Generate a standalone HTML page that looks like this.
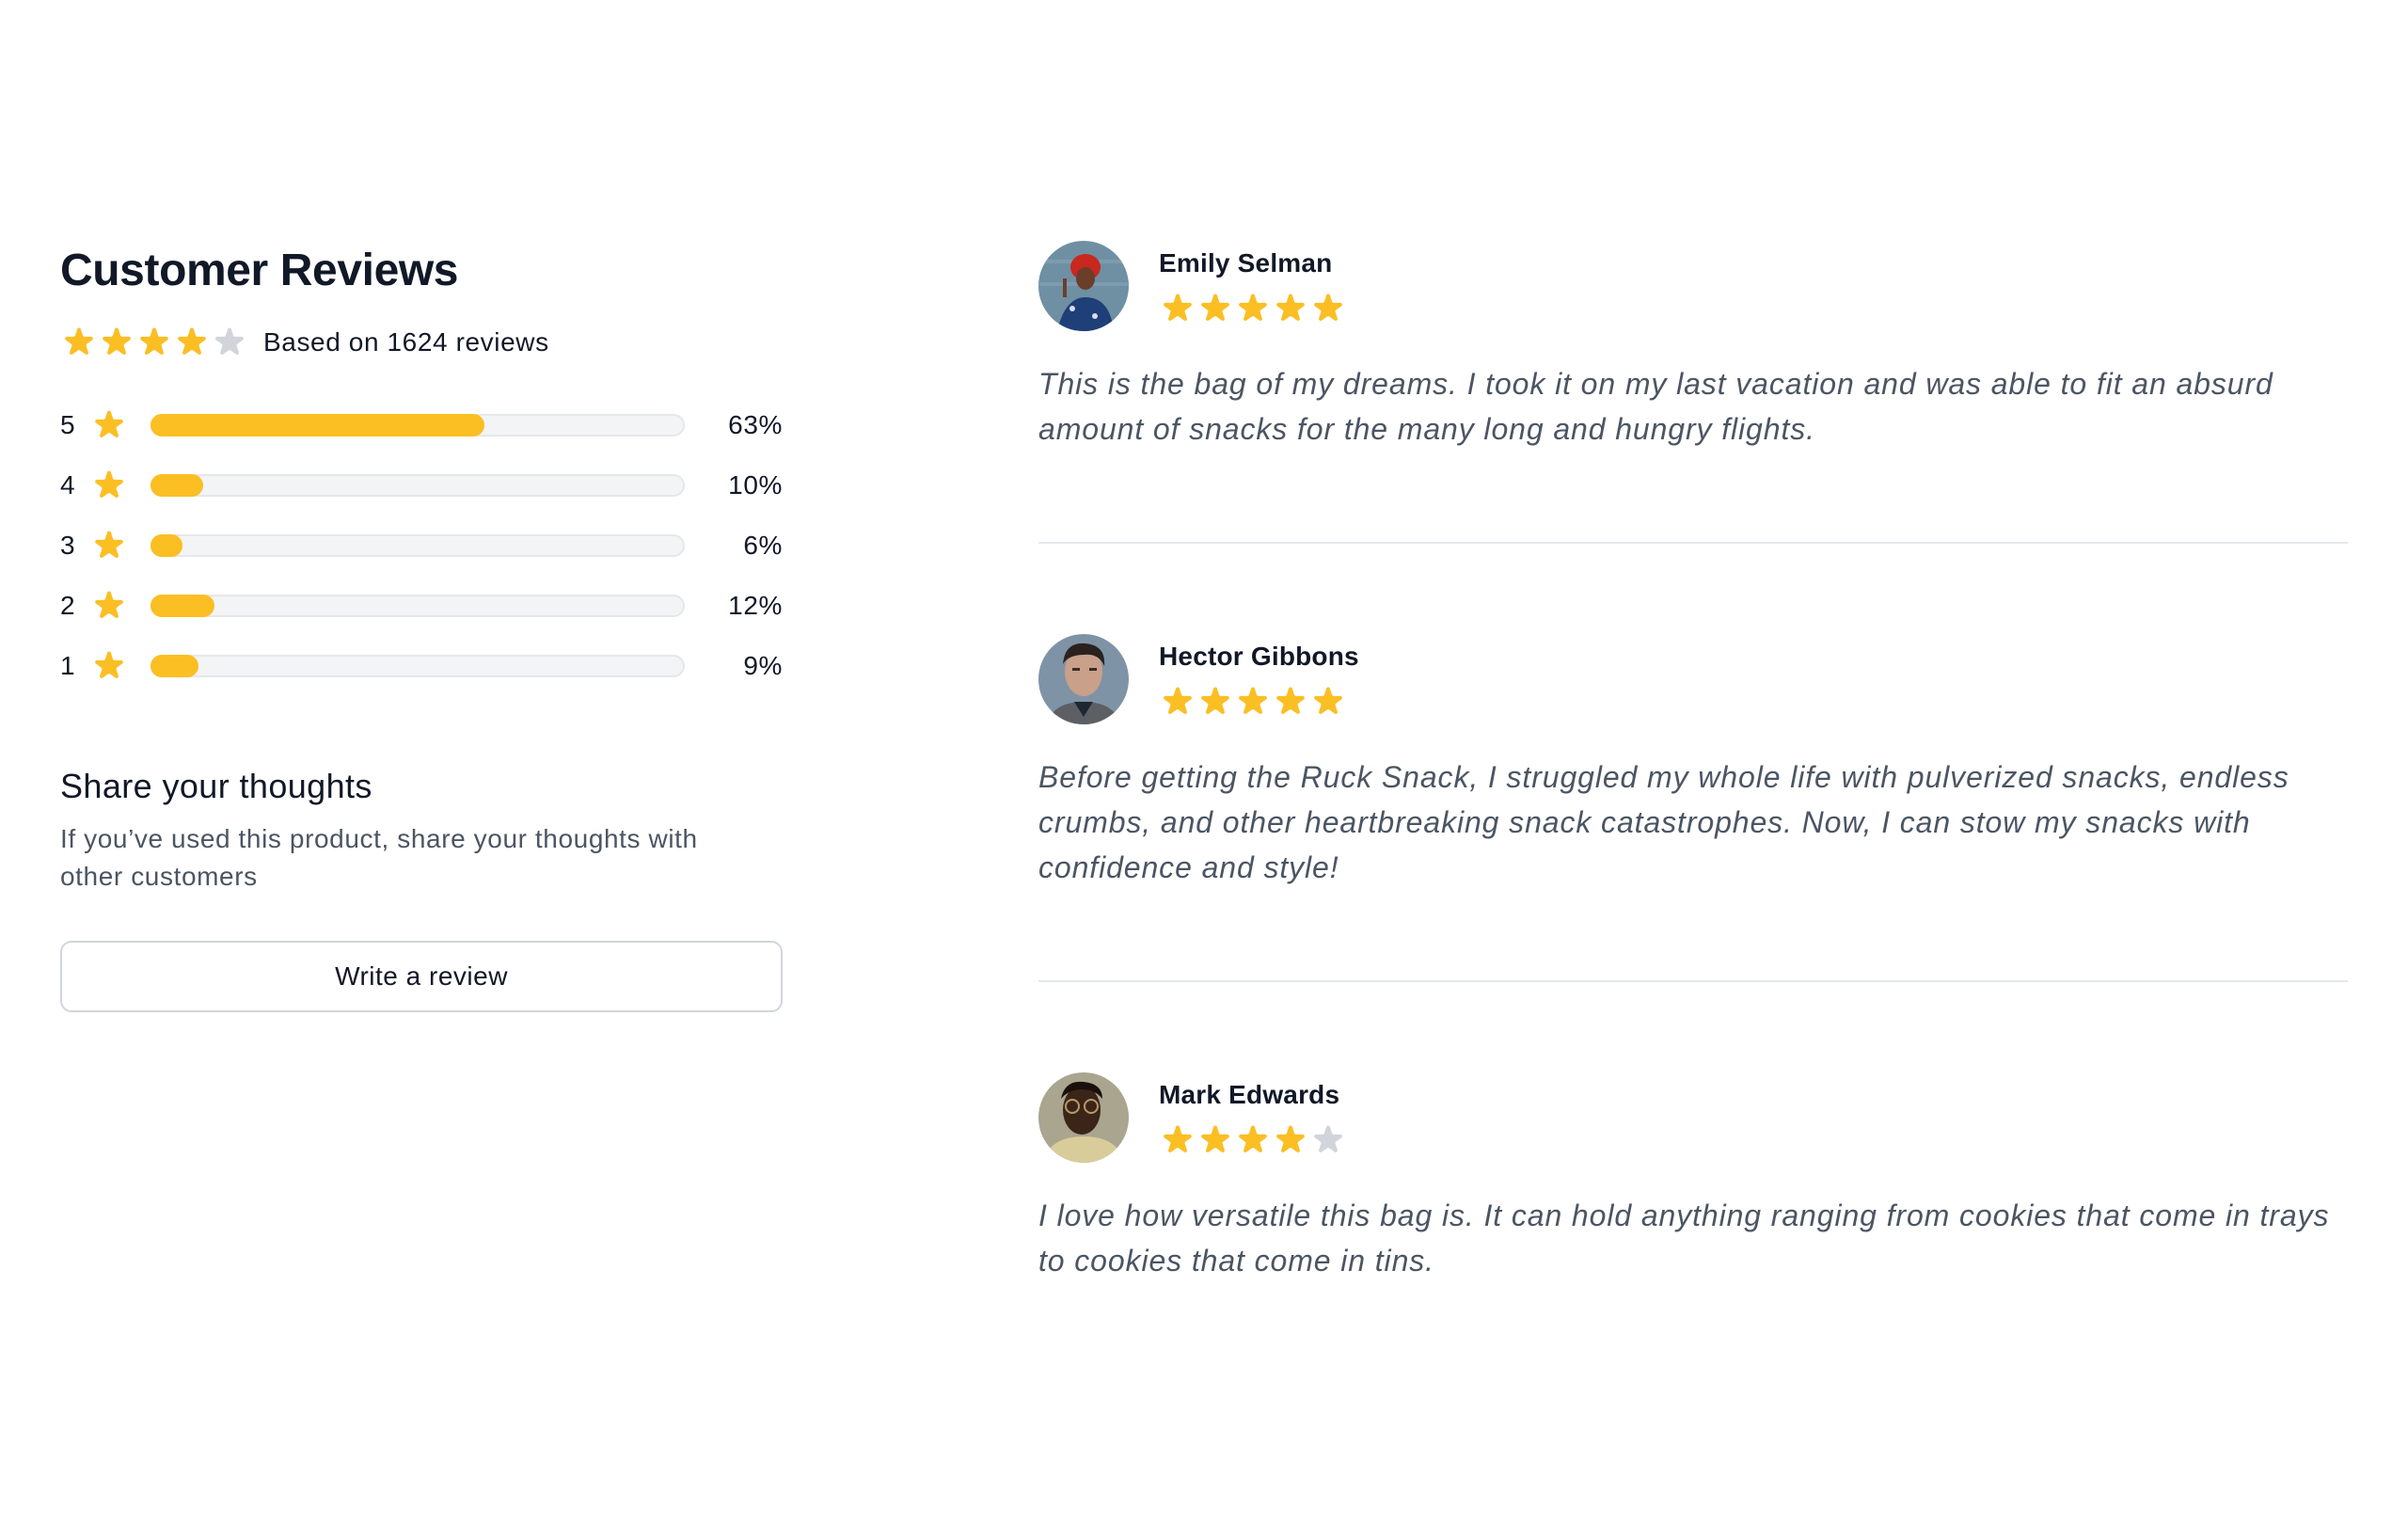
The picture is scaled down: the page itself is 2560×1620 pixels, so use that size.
<!DOCTYPE html>
<html><head><meta charset="utf-8"><style>
html{zoom:2}
*{box-sizing:border-box;margin:0;padding:0}
body{width:1280px;height:810px;background:#fff;font-family:"Liberation Sans",Arial,sans-serif;color:#111827;overflow:hidden}
.left{position:absolute;left:32px;top:128px;width:384px}
h2{font-size:24px;line-height:32px;font-weight:700;letter-spacing:-0.2px;color:#111827}
.row{display:flex;align-items:center}
svg.s{width:20px;height:20px;flex:none}
.y{fill:#fbbf24}.g{fill:#d1d5db}
.based{margin-left:8px;font-size:14px;letter-spacing:.3px;color:#111827}
dl{margin-top:24px}
.bar{display:flex;align-items:center;font-size:14px;height:20px;margin-bottom:12px;letter-spacing:.3px}
.bar .n{width:12px}
.bar .t{margin-left:12px;flex:1;height:12px;border:1px solid #e5e7eb;background:#f3f4f6;border-radius:9999px;position:relative}
.bar .f{position:absolute;left:-1px;top:-1px;bottom:-1px;background:#fbbf24;border-radius:9999px;border:1px solid #fbbf24}
.bar .p{margin-left:12px;width:40px;text-align:right}
h3{margin-top:40px;font-size:18px;font-weight:500;line-height:28px;letter-spacing:.2px}
.sub{margin-top:4px;font-size:14px;line-height:20px;color:#4b5563;letter-spacing:.3px}
.btn{margin-top:24px;display:flex;justify-content:center;border:1px solid #d1d5db;border-radius:6px;padding:8px 32px;font-size:14px;line-height:20px;font-weight:500;color:#111827;letter-spacing:.25px}
.right{position:absolute;left:552px;top:128px;width:696px}
.rev{padding:0 0 48px;border-bottom:1px solid #e5e7eb}
.rev+.rev{padding-top:48px}
.rev:last-child{border-bottom:none}
.hd{display:flex;align-items:center}
.av{width:48px;height:48px;border-radius:50%;overflow:hidden;flex:none}
.nm{margin-left:16px}
.nm h4{font-size:14px;font-weight:700;line-height:20px;letter-spacing:.1px}
.st{margin-top:4px;display:flex}
.txt{margin-top:16px;font-size:16px;line-height:24px;font-style:italic;color:#4b5563;white-space:nowrap;letter-spacing:.45px}
</style></head><body>
<svg width="0" height="0" style="position:absolute"><defs><path id="star" d="M9.049 2.927c.3-.921 1.603-.921 1.902 0l1.07 3.292a1 1 0 00.95.69h3.462c.969 0 1.371 1.24.588 1.81l-2.8 2.034a1 1 0 00-.364 1.118l1.070 3.292c.3.921-.755 1.688-1.54 1.118l-2.8-2.034a1 1 0 00-1.175 0l-2.8 2.034c-.784.57-1.838-.197-1.539-1.118l1.07-3.292a1 1 0 00-.363-1.118l-2.8-2.034c-.783-.57-.38-1.81.588-1.81h3.461a1 1 0 00.951-.69l1.07-3.292z"/></defs></svg>
<div class="left">
<h2>Customer Reviews</h2>
<div class="row" style="margin-top:12px">
<svg class="s y" viewBox="0 0 20 20"><use href="#star"/></svg><svg class="s y" viewBox="0 0 20 20"><use href="#star"/></svg><svg class="s y" viewBox="0 0 20 20"><use href="#star"/></svg><svg class="s y" viewBox="0 0 20 20"><use href="#star"/></svg><svg class="s g" viewBox="0 0 20 20"><use href="#star"/></svg>
<span class="based">Based on 1624 reviews</span></div>
<dl>
<div class="bar"><span class="n">5</span><svg class="s y" style="margin-left:4px" viewBox="0 0 20 20"><use href="#star"/></svg><div class="t"><div class="f" style="width:63%"></div></div><span class="p">63%</span></div>
<div class="bar"><span class="n">4</span><svg class="s y" style="margin-left:4px" viewBox="0 0 20 20"><use href="#star"/></svg><div class="t"><div class="f" style="width:10%"></div></div><span class="p">10%</span></div>
<div class="bar"><span class="n">3</span><svg class="s y" style="margin-left:4px" viewBox="0 0 20 20"><use href="#star"/></svg><div class="t"><div class="f" style="width:6%"></div></div><span class="p">6%</span></div>
<div class="bar"><span class="n">2</span><svg class="s y" style="margin-left:4px" viewBox="0 0 20 20"><use href="#star"/></svg><div class="t"><div class="f" style="width:12%"></div></div><span class="p">12%</span></div>
<div class="bar"><span class="n">1</span><svg class="s y" style="margin-left:4px" viewBox="0 0 20 20"><use href="#star"/></svg><div class="t"><div class="f" style="width:9%"></div></div><span class="p">9%</span></div>
</dl>
<h3>Share your thoughts</h3>
<p class="sub">If you’ve used this product, share your thoughts with<br>other customers</p>
<div class="btn">Write a review</div>
</div>
<div class="right">
<div class="rev">
<div class="hd"><div class="av"><svg width="48" height="48" viewBox="0 0 48 48"><rect width="48" height="48" fill="#6f8fa3"/><rect y="10" width="48" height="2" fill="#7d9cb0"/><rect y="22" width="48" height="2" fill="#7d9cb0"/><ellipse cx="25" cy="14" rx="8" ry="7" fill="#c8281f"/><ellipse cx="25" cy="20" rx="5" ry="6" fill="#6b3e2a"/><path d="M10 48 Q14 30 25 30 Q38 30 40 48Z" fill="#1f3f78"/><circle cx="18" cy="36" r="1.5" fill="#dde"/><circle cx="30" cy="40" r="1.5" fill="#dde"/><rect x="13" y="20" width="2" height="10" fill="#6b3e2a"/></svg></div>
<div class="nm"><h4>Emily Selman</h4><div class="st"><svg class="s y" viewBox="0 0 20 20"><use href="#star"/></svg><svg class="s y" viewBox="0 0 20 20"><use href="#star"/></svg><svg class="s y" viewBox="0 0 20 20"><use href="#star"/></svg><svg class="s y" viewBox="0 0 20 20"><use href="#star"/></svg><svg class="s y" viewBox="0 0 20 20"><use href="#star"/></svg></div></div></div>
<p class="txt">This is the bag of my dreams. I took it on my last vacation and was able to fit an absurd<br>amount of snacks for the many long and hungry flights.</p>
</div>
<div class="rev">
<div class="hd"><div class="av"><svg width="48" height="48" viewBox="0 0 48 48"><rect width="48" height="48" fill="#7f93a6"/><path d="M4 48 Q8 36 24 36 Q40 36 44 48Z" fill="#5c6064"/><path d="M19 36 L24 44 L29 36Z" fill="#1d2733"/><ellipse cx="24" cy="20" rx="10" ry="13" fill="#c9a08a"/><path d="M13 16 Q14 4 25 5 Q36 6 35 17 Q32 10 24 11 Q16 11 13 16Z" fill="#2b2220"/><rect x="18" y="18" width="4" height="1.5" fill="#3a2c26"/><rect x="27" y="18" width="4" height="1.5" fill="#3a2c26"/></svg></div>
<div class="nm"><h4>Hector Gibbons</h4><div class="st"><svg class="s y" viewBox="0 0 20 20"><use href="#star"/></svg><svg class="s y" viewBox="0 0 20 20"><use href="#star"/></svg><svg class="s y" viewBox="0 0 20 20"><use href="#star"/></svg><svg class="s y" viewBox="0 0 20 20"><use href="#star"/></svg><svg class="s y" viewBox="0 0 20 20"><use href="#star"/></svg></div></div></div>
<p class="txt">Before getting the Ruck Snack, I struggled my whole life with pulverized snacks, endless<br>crumbs, and other heartbreaking snack catastrophes. Now, I can stow my snacks with<br>confidence and style!</p>
</div>
<div class="rev">
<div class="hd"><div class="av"><svg width="48" height="48" viewBox="0 0 48 48"><rect width="48" height="48" fill="#a9a58f"/><path d="M2 48 Q6 34 24 34 Q42 34 46 48Z" fill="#d8cc9a"/><ellipse cx="23" cy="20" rx="10" ry="13" fill="#3b2518"/><path d="M12 14 Q14 4 24 5 Q34 6 34 14 Q30 9 23 9 Q16 9 12 14Z" fill="#1a110c"/><circle cx="18" cy="18" r="3.5" fill="none" stroke="#b89a6a" stroke-width="1"/><circle cx="28" cy="18" r="3.5" fill="none" stroke="#b89a6a" stroke-width="1"/></svg></div>
<div class="nm"><h4>Mark Edwards</h4><div class="st"><svg class="s y" viewBox="0 0 20 20"><use href="#star"/></svg><svg class="s y" viewBox="0 0 20 20"><use href="#star"/></svg><svg class="s y" viewBox="0 0 20 20"><use href="#star"/></svg><svg class="s y" viewBox="0 0 20 20"><use href="#star"/></svg><svg class="s g" viewBox="0 0 20 20"><use href="#star"/></svg></div></div></div>
<p class="txt">I love how versatile this bag is. It can hold anything ranging from cookies that come in trays<br>to cookies that come in tins.</p>
</div>
</div>
</body></html>
